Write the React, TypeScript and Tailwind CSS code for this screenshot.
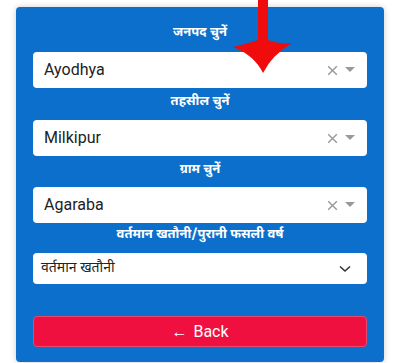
import React from "react";

const hindi = { fontFamily: '"Noto Sans Devanagari", "Noto Sans", "Lohit Devanagari", sans-serif' };

const Label = ({ text, className = "" }: { text: string; className?: string }) => (
  <div className={`h-5 text-center text-[13px] font-bold leading-5 text-white ${className}`} style={hindi}>
    {text}
  </div>
);

const SelectBox = ({ value, className = "" }: { value: string; className?: string }) => (
  <div className={`flex h-9 items-center rounded-[4px] bg-white pl-[11px] pr-[12px] ${className}`}>
    <span className="flex-1 text-[16px] text-[#222]" style={{ fontFamily: "Roboto, Arial, sans-serif" }}>
      {value}
    </span>
    <svg width="13" height="13" viewBox="0 0 12 12" className="mr-[6px]">
      <path d="M2 2 L10 10 M10 2 L2 10" stroke="#999" strokeWidth="1.3" />
    </svg>
    <svg width="10" height="6" viewBox="0 0 10 6">
      <path d="M0 0 L10 0 L5 5 Z" fill="#999" />
    </svg>
  </div>
);

export default function App() {
  return (
    <div className="relative min-h-[363px] bg-white pt-[7px]">
      <div className="mx-[16px] rounded-[4px] bg-[#0b6fcb] px-[17px] pb-[15px] pt-[16px] shadow-[0_0_6px_rgba(0,0,0,0.2)]">
        <Label text="जनपद चुनें" />
        <SelectBox value="Ayodhya" className="mt-[9px]" />
        <Label text="तहसील चुनें" className="mt-[4px]" />
        <SelectBox value="Milkipur" className="mt-[8px]" />
        <Label text="ग्राम चुनें" className="mt-[4px]" />
        <SelectBox value="Agaraba" className="mt-[7px]" />
        <Label text="वर्तमान खतौनी/पुरानी फसली वर्ष" className="mt-[2px]" />
        <div className="mt-[8px] flex h-[31px] items-center rounded-[4px] bg-white pl-[8px] pr-[16px]">
          <span className="flex-1 text-[14px] leading-5 text-[#222]" style={hindi}>
            वर्तमान खतौनी
          </span>
          <svg width="12" height="8" viewBox="0 0 12 8">
            <path d="M1 1.5 L6 6 L11 1.5" stroke="#333" strokeWidth="1.6" fill="none" />
          </svg>
        </div>
        <button
          className="mt-[32px] flex h-[31px] w-full items-center justify-center gap-[6px] rounded-[4px] border border-[#e84a6e] bg-[#f0103f] text-[16px] text-white"
          style={{ fontFamily: "Roboto, Arial, sans-serif" }}
        >
          <span>←</span>
          <span>Back</span>
        </button>
      </div>
      <svg className="pointer-events-none absolute left-0 top-0" width="400" height="80" viewBox="0 0 400 80">
        <path
          d="M258 0 L268 0 L268 40 Q278 44 292 43 Q272 55 263 73 Q254 55 233 47 Q246 44 258 40 Z"
          fill="#f00c0c"
        />
      </svg>
    </div>
  );
}
